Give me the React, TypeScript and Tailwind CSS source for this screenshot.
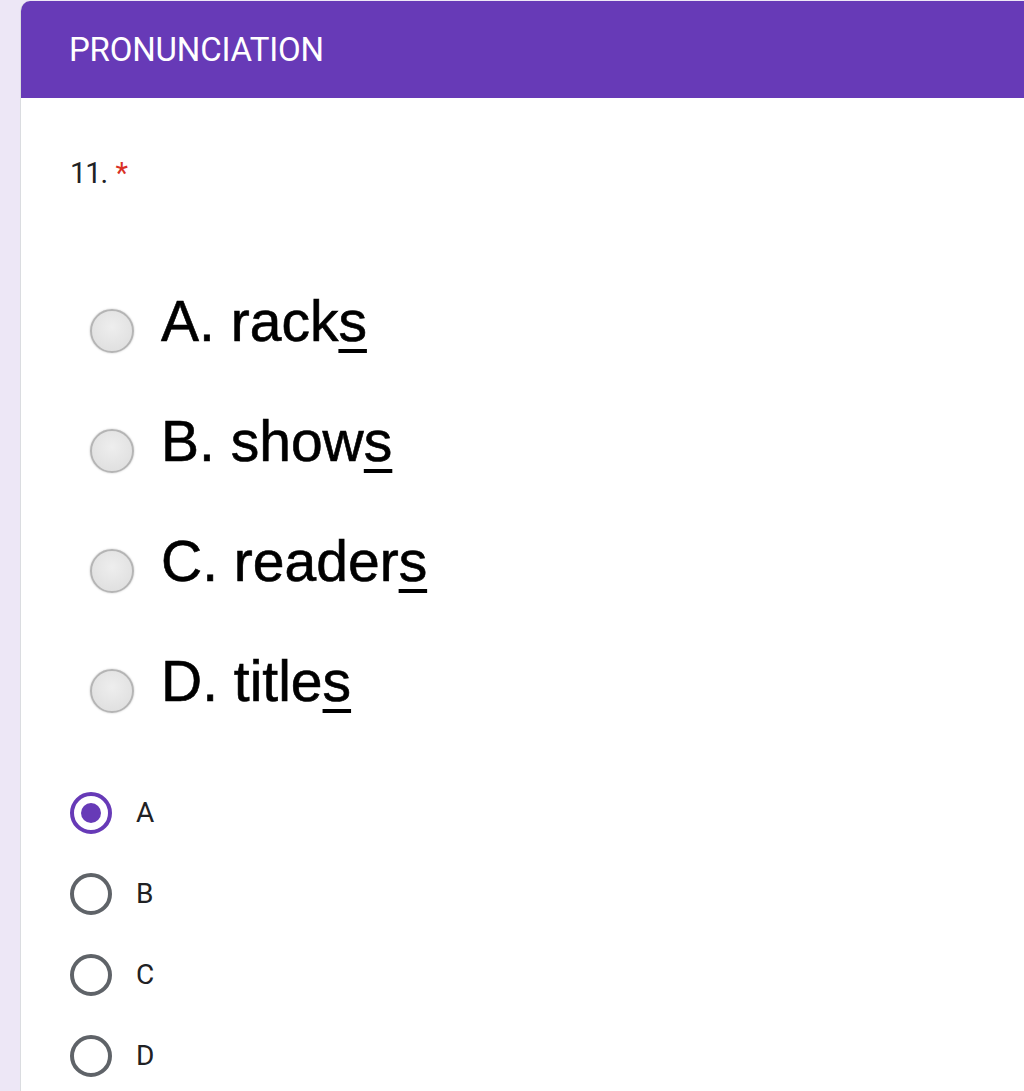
import React from 'react';

const imageOptions = [
  { key: 'A', word: 'rack' },
  { key: 'B', word: 'show' },
  { key: 'C', word: 'reader' },
  { key: 'D', word: 'title' },
];

const answers = ['A', 'B', 'C', 'D'];

export default function App() {
  const selected = 'A';

  return (
    <div className="min-h-[1091px] bg-[#ede7f6] pl-[20px] pt-[1px] overflow-hidden">
      <div className="min-h-[1090px] bg-white rounded-tl-[10px] border-l border-[#dadce0] overflow-hidden">
        <div
          className="h-[97px] bg-[#673ab7] pl-[48px] flex items-center text-white text-[33px] tracking-[-0.2px]"
          style={{ fontFamily: 'Roboto, "Noto Sans", sans-serif' }}
        >
          PRONUNCIATION
        </div>

        <div className="pl-[49px]">
          <div
            className="pt-[61px] text-[29px] text-[#202124] leading-none tracking-[-1px]"
            style={{ fontFamily: 'Roboto, sans-serif' }}
          >
            11. <span className="text-[#d93025] ml-[2px]">*</span>
          </div>

          {/* question image */}
          <div className="pt-[107px] pl-[20px] flex flex-col gap-[68px]">
            {imageOptions.map((o) => (
              <div key={o.key} className="flex items-center h-[52px]">
                <div className="w-[44px] h-[44px] mt-[20px] rounded-full border-[2px] border-[#b5b5b5] bg-[radial-gradient(circle_at_50%_40%,#eeeeee,#dcdcdc)] shadow-[0_0_2px_rgba(0,0,0,0.25)]" />
                <div
                  className="ml-[27px] text-[57px] text-black leading-none [-webkit-text-stroke:0.6px_black]"
                  style={{ fontFamily: '"Liberation Sans", Arial, sans-serif' }}
                >
                  {o.key}. {o.word}
                  <span className="underline decoration-[4px] underline-offset-[8px]">s</span>
                </div>
              </div>
            ))}
          </div>

          {/* answers */}
          <div className="pt-[85px] flex flex-col gap-[39px]">
            {answers.map((a) => (
              <div key={a} className="flex items-center h-[42px]">
                {a === selected ? (
                  <div className="w-[42px] h-[42px] rounded-full border-[4px] border-[#673ab7] flex items-center justify-center">
                    <div className="w-[20px] h-[20px] rounded-full bg-[#673ab7]" />
                  </div>
                ) : (
                  <div className="w-[42px] h-[42px] rounded-full border-[4px] border-[#5f6368]" />
                )}
                <span
                  className="ml-[24px] text-[28px] text-[#202124]"
                  style={{ fontFamily: 'Roboto, sans-serif' }}
                >
                  {a}
                </span>
              </div>
            ))}
          </div>
        </div>
      </div>
    </div>
  );
}
